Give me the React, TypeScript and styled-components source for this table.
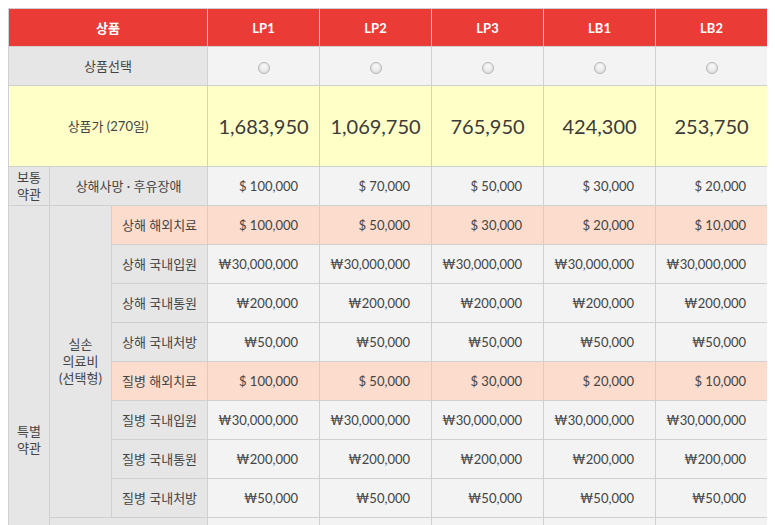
import React from 'react';
import styled, { createGlobalStyle } from 'styled-components';

const GlobalStyle = createGlobalStyle`
  body {
    margin: 8px;
    background: #fff;
    font-family: Lato, 'Noto Sans CJK KR', sans-serif;
    color: #444;
  }
`;

const Table = styled.table`
  width: 760px;
  border-collapse: collapse;
  table-layout: fixed;
  font-size: 13px;

  td,
  th {
    border: 1px solid #d0d0d0;
    padding: 0;
    vertical-align: middle;
  }
`;

const HeadRow = styled.tr`
  height: 38px;
  th {
    background: #ea3b36;
    color: #fff;
    font-weight: 700;
    font-size: 13px;
    text-align: center;
  }
`;

const Row = styled.tr<{ $h?: number }>`
  height: ${(p) => p.$h || 39}px;
`;

const Label = styled.td<{ $tone?: 'peach' | 'yellow' }>`
  background: ${(p) =>
    p.$tone === 'peach' ? '#fbdccd' : p.$tone === 'yellow' ? '#ffffc8' : '#e6e6e6'};
  text-align: center;
  line-height: 17px;
  color: #444;
`;

const Value = styled.td<{ $tone?: 'peach' | 'yellow' }>`
  background: ${(p) =>
    p.$tone === 'peach' ? '#fbdccd' : p.$tone === 'yellow' ? '#ffffc8' : '#f3f3f3'};
  text-align: right;
  padding-right: 21px !important;
  color: #444;
`;

const Price = styled.td`
  background: #ffffc8;
  text-align: center;
  font-size: 20px;
  color: #3a3a3a;
`;

const Pick = styled.td`
  background: #f3f3f3;
  text-align: center;
`;

const Radio = styled.input`
  appearance: none;
  width: 12px;
  height: 12px;
  margin: 0;
  border-radius: 50%;
  border: 1px solid #b5b5b5;
  background: radial-gradient(circle at 50% 35%, #fafafa, #d9d9d9);
  vertical-align: middle;
`;

const plans = ['LP1', 'LP2', 'LP3', 'LB1', 'LB2'];
const prices = ['1,683,950', '1,069,750', '765,950', '424,300', '253,750'];

type Line = { name: string; vals: string[]; tone?: 'peach' };

const silson: Line[] = [
  { name: '상해 해외치료', vals: ['$ 100,000', '$ 50,000', '$ 30,000', '$ 20,000', '$ 10,000'], tone: 'peach' },
  { name: '상해 국내입원', vals: Array(5).fill('₩30,000,000') },
  { name: '상해 국내통원', vals: Array(5).fill('₩200,000') },
  { name: '상해 국내처방', vals: Array(5).fill('₩50,000') },
  { name: '질병 해외치료', vals: ['$ 100,000', '$ 50,000', '$ 30,000', '$ 20,000', '$ 10,000'], tone: 'peach' },
  { name: '질병 국내입원', vals: Array(5).fill('₩30,000,000') },
  { name: '질병 국내통원', vals: Array(5).fill('₩200,000') },
  { name: '질병 국내처방', vals: Array(5).fill('₩50,000') },
];

const extra: Line[] = [
  { name: '질병사망', vals: ['₩30,000,000', '₩20,000,000', '₩10,000,000', '₩5,000,000', '₩3,000,000'] },
  { name: '배상책임', vals: ['₩20,000,000', '₩10,000,000', '₩5,000,000', '₩3,000,000', '₩1,000,000'] },
  { name: '휴대품손해', vals: ['₩500,000', '₩300,000', '₩200,000', '₩100,000', '-'] },
  { name: '특별비용', vals: ['₩5,000,000', '₩3,000,000', '₩2,000,000', '₩1,000,000', '-'] },
];

export default function App() {
  return (
    <>
      <GlobalStyle />
      <Table>
        <colgroup>
          <col style={{ width: 41 }} />
          <col style={{ width: 62 }} />
          <col style={{ width: 96 }} />
          {plans.map((p) => (
            <col key={p} style={{ width: 112 }} />
          ))}
        </colgroup>
        <thead>
          <HeadRow>
            <th colSpan={3}>상품</th>
            {plans.map((p) => (
              <th key={p}>{p}</th>
            ))}
          </HeadRow>
        </thead>
        <tbody>
          <Row>
            <Label colSpan={3}>상품선택</Label>
            {plans.map((p) => (
              <Pick key={p}>
                <Radio type="radio" name="plan" />
              </Pick>
            ))}
          </Row>
          <Row $h={81}>
            <Label colSpan={3} $tone="yellow">
              상품가 (270일)
            </Label>
            {prices.map((v) => (
              <Price key={v}>{v}</Price>
            ))}
          </Row>
          <Row>
            <Label>
              보통
              <br />
              약관
            </Label>
            <Label colSpan={2}>상해사망 · 후유장애</Label>
            {['$ 100,000', '$ 70,000', '$ 50,000', '$ 30,000', '$ 20,000'].map((v) => (
              <Value key={v}>{v}</Value>
            ))}
          </Row>
          {silson.map((line, i) => (
            <Row key={line.name}>
              {i === 0 && (
                <Label rowSpan={silson.length + extra.length}>
                  특별
                  <br />
                  약관
                </Label>
              )}
              {i === 0 && (
                <Label rowSpan={silson.length}>
                  실손
                  <br />
                  의료비
                  <br />
                  (선택형)
                </Label>
              )}
              <Label $tone={line.tone}>{line.name}</Label>
              {line.vals.map((v, j) => (
                <Value key={j} $tone={line.tone}>
                  {v}
                </Value>
              ))}
            </Row>
          ))}
          {extra.map((line) => (
            <Row key={line.name}>
              <Label colSpan={2}>{line.name}</Label>
              {line.vals.map((v, j) => (
                <Value key={j}>{v}</Value>
              ))}
            </Row>
          ))}
        </tbody>
      </Table>
    </>
  );
}
